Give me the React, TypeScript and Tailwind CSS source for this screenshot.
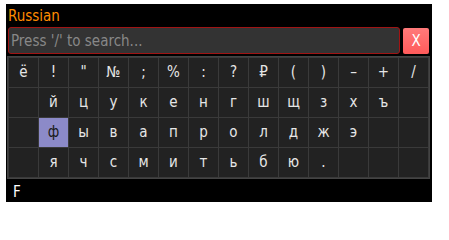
import React from 'react';

const rows: string[][] = [
  ['ё', '!', '"', '№', ';', '%', ':', '?', '₽', '(', ')', '–', '+', '/'],
  ['', 'й', 'ц', 'у', 'к', 'е', 'н', 'г', 'ш', 'щ', 'з', 'х', 'ъ', ''],
  ['', 'ф', 'ы', 'в', 'а', 'п', 'р', 'о', 'л', 'д', 'ж', 'э', '', ''],
  ['', 'я', 'ч', 'с', 'м', 'и', 'т', 'ь', 'б', 'ю', '.', '', '', ''],
];

const font = "font-['DejaVu_Sans_Condensed','Liberation_Sans_Narrow',sans-serif]";

export default function App() {
  return (
    <div className={`h-[217px] bg-white pl-[6px] pt-[4px] ${font}`}>
      <div className="flex h-[198px] w-[426px] flex-col bg-black">
        <div className="h-[23px] pl-[2px] pt-px text-[15px] leading-[22px] text-[#ff8c00]">
          Russian
        </div>
        <div className="flex h-[27px] items-start gap-[3px] pl-[2px]">
          <input
            className="h-[27px] w-[392px] rounded-[3px] border border-[#a01414] bg-[#333333] px-[2px] text-[15px] text-[#ddd] outline-none placeholder:text-[#888888]"
            placeholder="Press '/' to search..."
          />
          <button className="mt-px flex h-[26px] w-[26px] items-center justify-center rounded-[2px] bg-gradient-to-b from-[#ff7a7a] to-[#ff5a5a] text-[15px] text-white">
            X
          </button>
        </div>
        <div className="ml-px mt-[2px] w-[423px] border border-[#444444]">
          <div className="grid grid-cols-[repeat(14,29px)] auto-rows-[29px] gap-px bg-[#3a3a3a] p-px">
            {rows.flat().map((k, i) => {
              const active = k === 'ф';
              return (
                <div
                  key={i}
                  className={`flex items-center justify-center text-[15px] ${
                    active ? 'bg-[#8c8ac8] text-[#1a1a1a]' : 'bg-[#222222] text-[#e6e6e6]'
                  }`}
                >
                  {k}
                </div>
              );
            })}
          </div>
        </div>
        <div className="pl-[7px] pt-[2px] text-[15px] leading-[22px] text-white">F</div>
      </div>
    </div>
  );
}
